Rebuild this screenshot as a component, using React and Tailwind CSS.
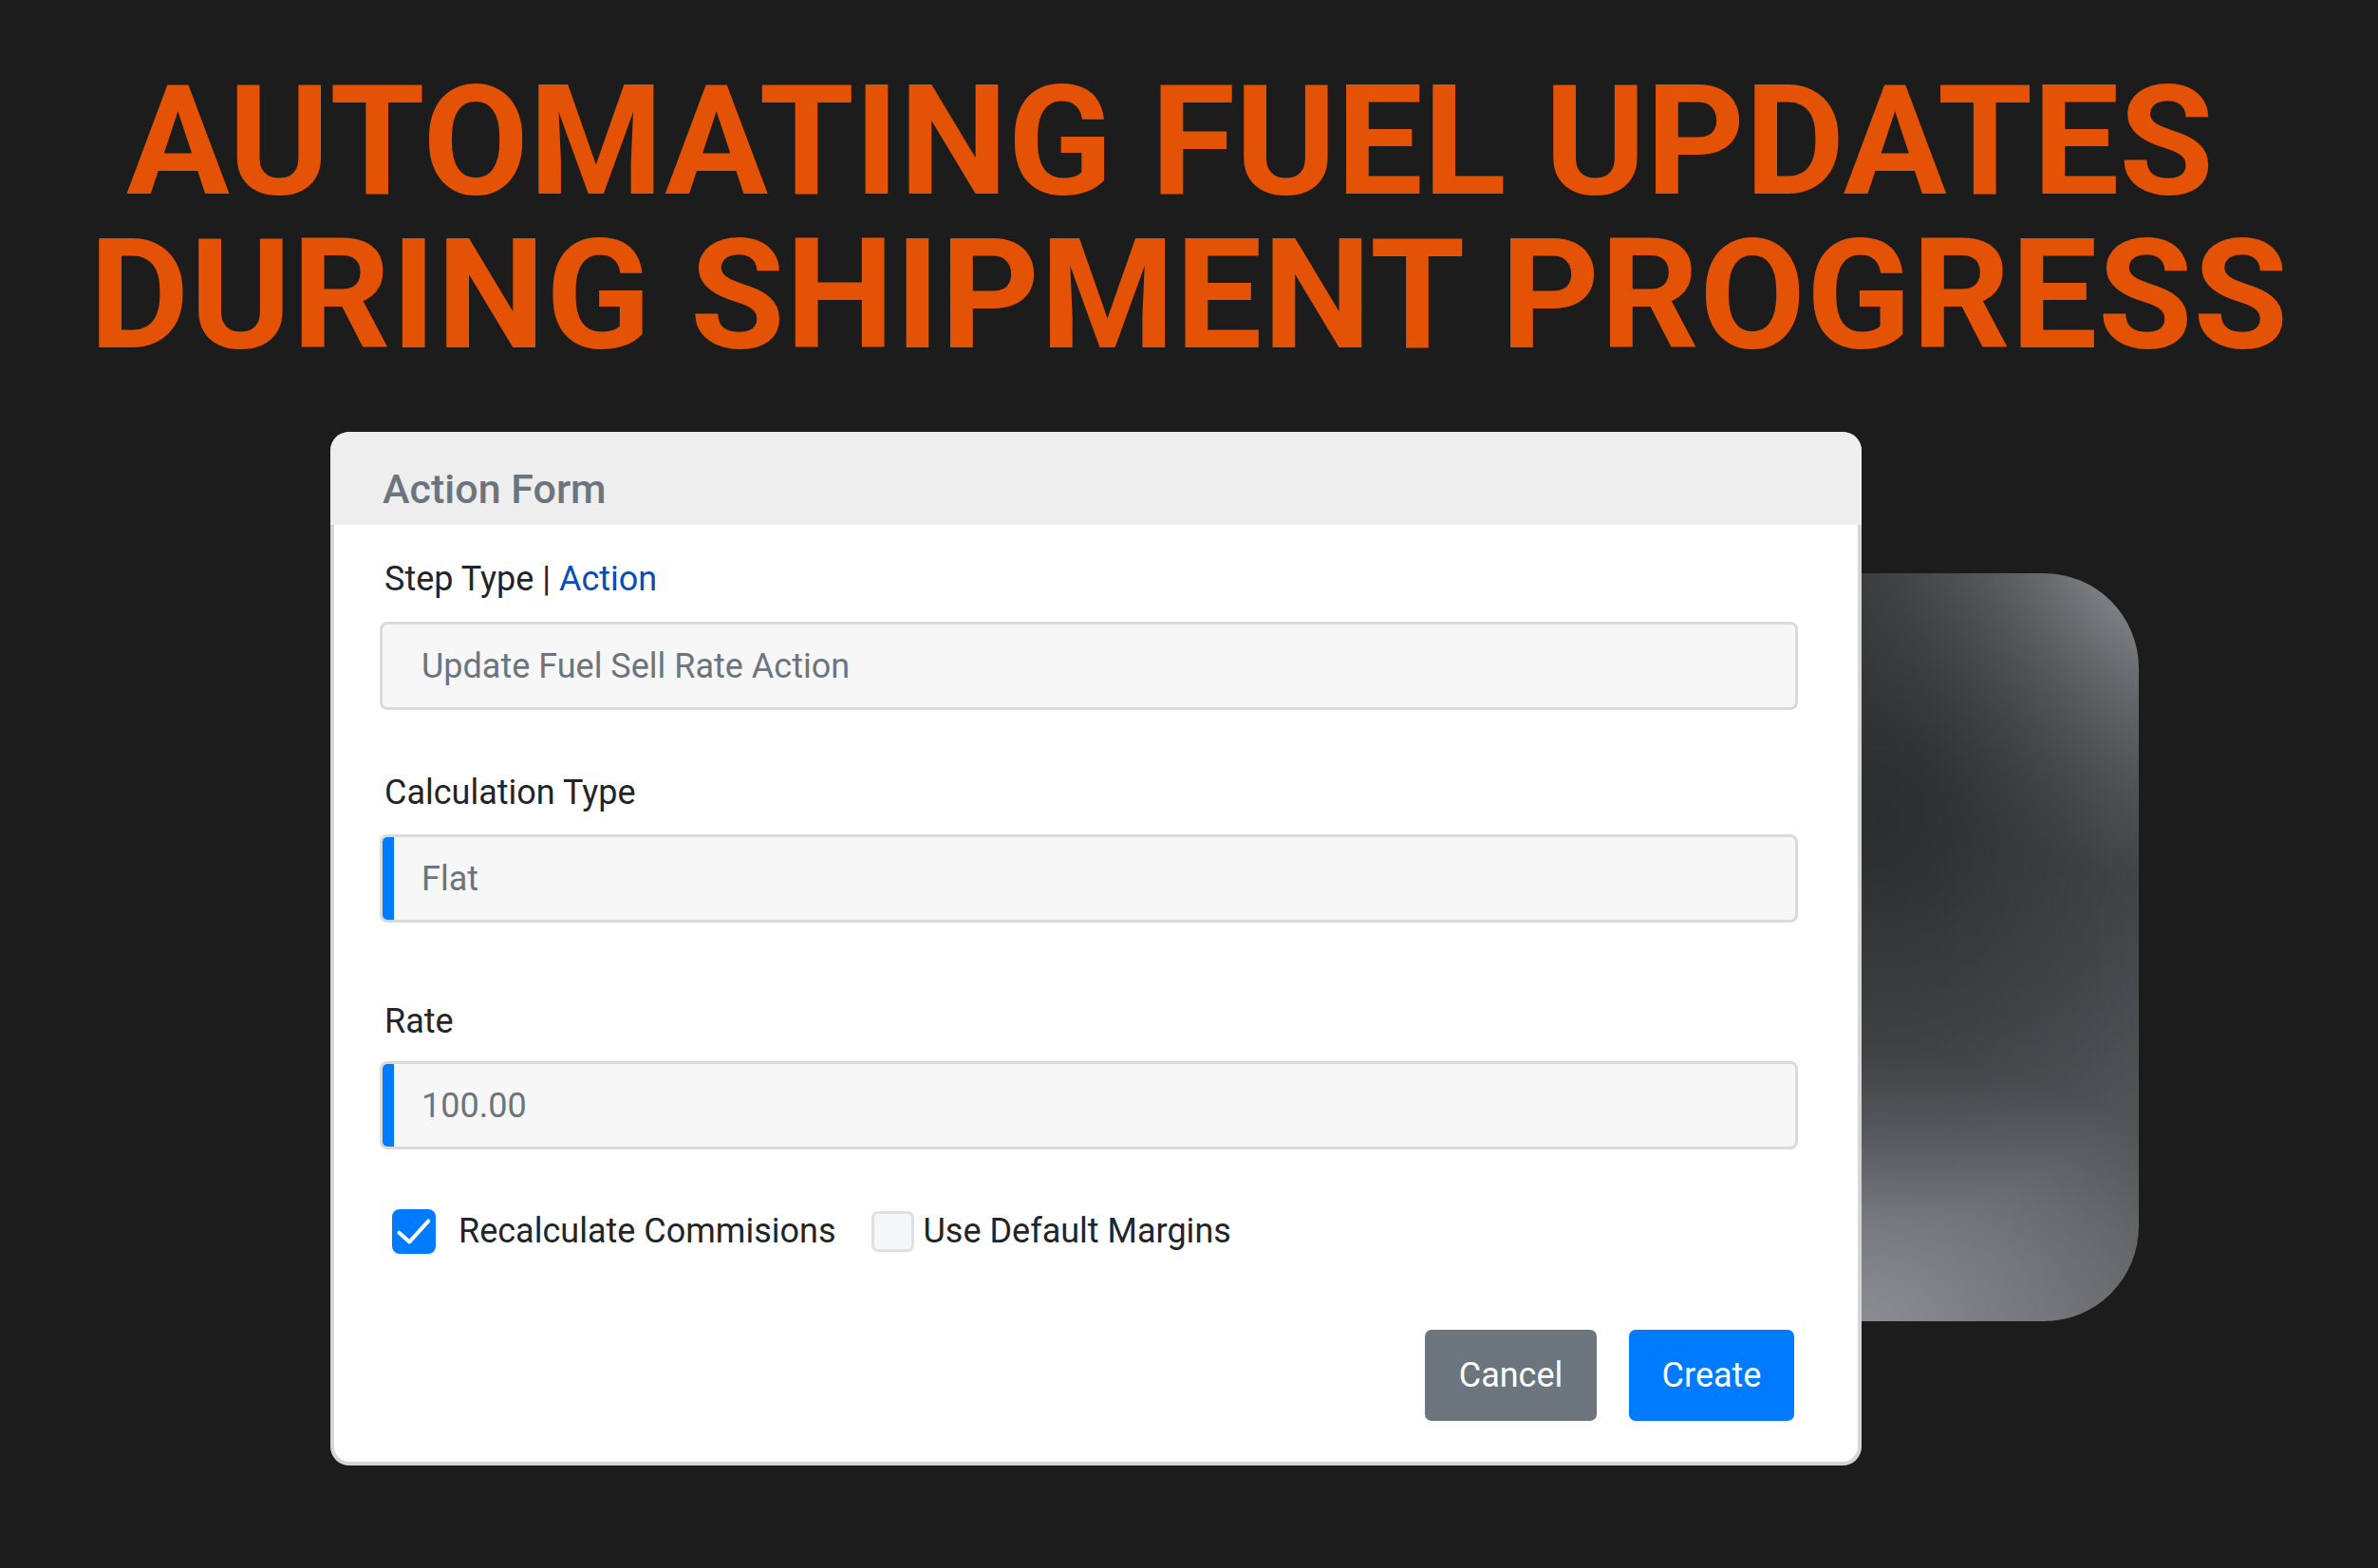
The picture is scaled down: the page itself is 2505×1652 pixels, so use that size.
import { useState } from "react"

const font = { fontFamily: "Roboto, 'Noto Sans', sans-serif" }

function Field({ value, accent }) {
  return (
    <div className="flex h-[93px] w-[1494px] rounded-[8px] border-[3px] border-[#dadada] bg-[#f7f7f7] overflow-hidden">
      {accent && <div className="w-[12px] shrink-0 bg-[#007bff]" />}
      <div className={`flex items-center text-[36px] text-[#6c757d] ${accent ? "pl-[29px]" : "pl-[41px]"}`}>
        {value}
      </div>
    </div>
  )
}

function Label({ children, className = "" }) {
  return <div className={`pl-[5px] text-[36px] leading-[43px] text-[#212529] ${className}`}>{children}</div>
}

export default function App() {
  const [recalc, setRecalc] = useState(true)
  const [margins, setMargins] = useState(false)

  return (
    <div className="w-[2505px] h-[1652px] bg-[#1c1c1c] overflow-hidden" style={font}>
      <h1 className="pt-[68px] text-center text-[162px] leading-[162px] font-bold text-[#e35205]">
        <span className="block pr-[40px]">AUTOMATING FUEL UPDATES</span>
        <span className="block tracking-[0.7px]">DURING SHIPMENT PROGRESS</span>
      </h1>

      <div className="flex items-start pl-[348px] mt-[63px]">
        <div className="relative z-10 w-[1613px] rounded-[20px] bg-[#d6d6d6] overflow-hidden">
          <div className="h-[98px] bg-[#eeeeee] pl-[55px] pt-[35px] text-[43px] leading-[50px] font-medium text-[#6c757d]">
            Action Form
          </div>
          <div className="mx-[4px] mb-[4px] rounded-b-[16px] bg-white pl-[48px] pt-[36px] pb-[43px]">
            <Label>
              Step Type | <span className="text-[#0b4db3]">Action</span>
            </Label>
            <div className="mt-[23px]">
              <Field value="Update Fuel Sell Rate Action" />
            </div>

            <Label className="mt-[66px]">Calculation Type</Label>
            <div className="mt-[22px]">
              <Field value="Flat" accent />
            </div>

            <Label className="mt-[83px]">Rate</Label>
            <div className="mt-[20px]">
              <Field value="100.00" accent />
            </div>

            <div className="mt-[59px] flex items-center pl-[13px] text-[36px] text-[#212529]">
              <button
                onClick={() => setRecalc(!recalc)}
                className={`flex h-[47px] w-[46px] items-center justify-center rounded-[8px] ${recalc ? "bg-[#007bff]" : "border-[3px] border-[#dde1e6] bg-[#f6f7f8]"}`}
              >
                {recalc && (
                  <svg width="46" height="46" viewBox="0 0 46 46" fill="none">
                    <path d="M7.4 24.7 L18.4 34.4 L38.3 12.4" stroke="white" strokeWidth="4" strokeLinecap="round" strokeLinejoin="round" />
                  </svg>
                )}
              </button>
              <span className="ml-[24px]">Recalculate Commisions</span>
              <button
                onClick={() => setMargins(!margins)}
                className={`ml-[38px] flex h-[43px] w-[45px] items-center justify-center rounded-[7px] ${margins ? "bg-[#007bff]" : "border-[3px] border-[#dde1e6] bg-[#f6f7f8]"}`}
              />
              <span className="ml-[9px]">Use Default Margins</span>
            </div>

            <div className="mt-[77px] flex justify-end gap-[34px] pr-[67px] text-[36px] text-white">
              <button className="h-[96px] w-[181px] rounded-[7px] bg-[#6c757d]">Cancel</button>
              <button className="h-[96px] w-[174px] rounded-[7px] bg-[#007bff]">Create</button>
            </div>
          </div>
        </div>

        <div className="-ml-[300px] mt-[149px] h-[788px] w-[592px] rounded-r-[100px] bg-[radial-gradient(360px_420px_at_320px_260px,#2c2d2e_0px,transparent_100%),radial-gradient(circle_at_592px_0px,#959699_0px,transparent_320px),radial-gradient(420px_280px_at_300px_788px,#8c8d90_0px,transparent_100%),linear-gradient(#3e3f41,#5a5b5e)]" />
      </div>
    </div>
  )
}
